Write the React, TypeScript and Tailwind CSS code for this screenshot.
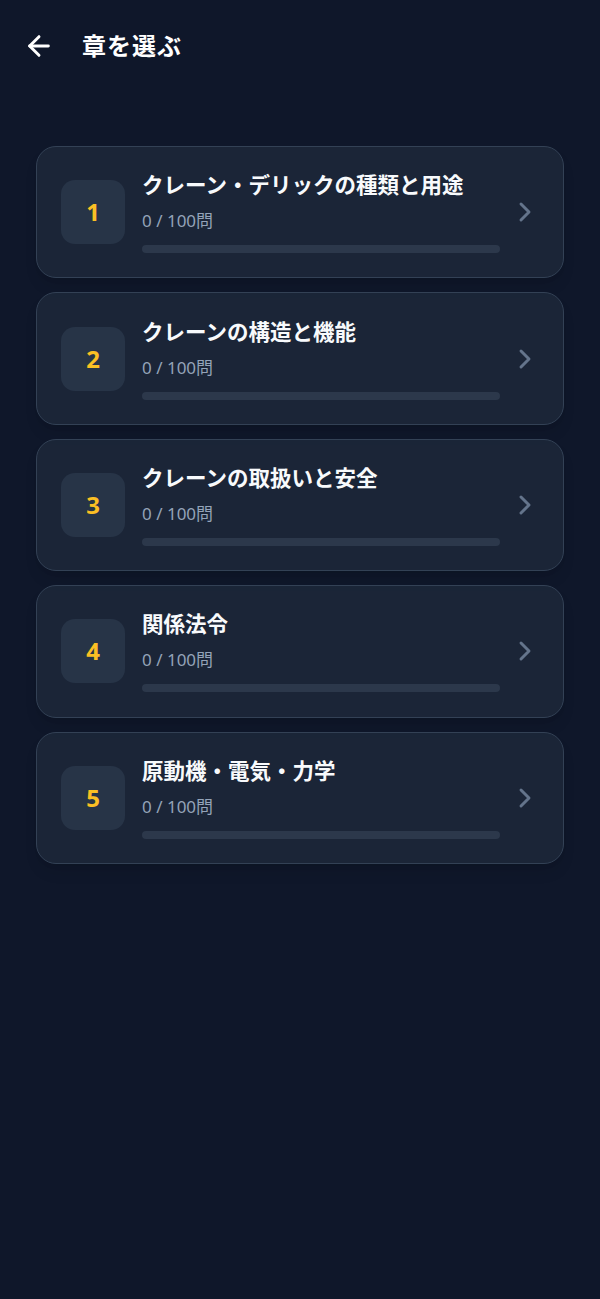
import { ArrowLeft, ChevronRight } from "lucide-react";

interface Chapter {
  id: number;
  title: string;
  answered: number;
  total: number;
}

const CHAPTERS: Chapter[] = [
  { id: 1, title: "クレーン・デリックの種類と用途", answered: 0, total: 100 },
  { id: 2, title: "クレーンの構造と機能", answered: 0, total: 100 },
  { id: 3, title: "クレーンの取扱いと安全", answered: 0, total: 100 },
  { id: 4, title: "関係法令", answered: 0, total: 100 },
  { id: 5, title: "原動機・電気・力学", answered: 0, total: 100 },
];

const font = { fontFamily: '"Noto Sans", "Noto Sans CJK JP", sans-serif' };

export default function App() {
  return (
    <div className="min-h-[1299px] w-full bg-[#0f172a] text-white" style={font}>
      {/* Header */}
      <div className="flex items-center gap-[27px] px-[23px] pt-[28px] pb-[30px]">
        <button className="flex h-[32px] w-[32px] items-center justify-center text-white">
          <ArrowLeft className="h-[32px] w-[32px]" strokeWidth={2.2} />
        </button>
        <h1 className="text-[24px] font-bold leading-[36px] tracking-[1px]">章を選ぶ</h1>
      </div>

      {/* Chapter list */}
      <div className="flex flex-col gap-[14px] px-[36px] pt-[52px]">
        {CHAPTERS.map((chapter) => {
          const pct = (chapter.answered / chapter.total) * 100;
          return (
            <div
              key={chapter.id}
              className="flex items-center gap-[17px] rounded-[20px] border border-[#334155] bg-[#1e293b]/80 py-[24.2px] pl-[24px] pr-[22px] shadow-lg"
            >
              {/* Number */}
              <div className="flex h-[64px] w-[64px] shrink-0 items-center justify-center rounded-[14px] bg-[#273447]">
                <span className="text-[24px] font-bold text-[#fbbf24]">{chapter.id}</span>
              </div>

              {/* Details */}
              <div className="min-w-0 flex-1">
                <p className="text-[21.5px] font-bold leading-[28px] text-[#f8fafc]">{chapter.title}</p>
                <p className="mt-[10px] text-[17px] leading-[24px] text-[#94a3b8]">
                  {chapter.answered} / {chapter.total}問
                </p>
                <div className="mt-[12px] h-[8px] w-full rounded-full bg-[#2c384b]">
                  <div className="h-full rounded-full bg-[#fbbf24]" style={{ width: `${pct}%` }} />
                </div>
              </div>

              <ChevronRight className="-ml-[8px] h-[32px] w-[32px] shrink-0 text-[#64748b]" strokeWidth={2.2} />
            </div>
          );
        })}
      </div>
    </div>
  );
}
